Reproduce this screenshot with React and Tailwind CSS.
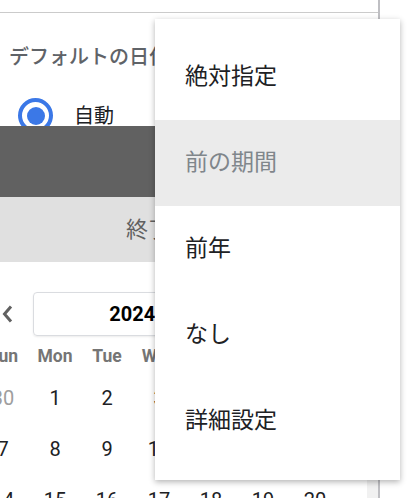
const MENU_ITEMS = [
  { label: '絶対指定' },
  { label: '前の期間', active: true },
  { label: '前年' },
  { label: 'なし' },
  { label: '詳細設定' },
]

const DAYS = ['Sun', 'Mon', 'Tue', 'Wed', 'Thu', 'Fri', 'Sat']

const WEEKS = [
  [{ d: 30, muted: true }, { d: 1 }, { d: 2 }, { d: 3 }, { d: 4 }, { d: 5 }, { d: 6 }],
  [{ d: 7 }, { d: 8 }, { d: 9 }, { d: 10 }, { d: 11 }, { d: 12 }, { d: 13 }],
  [{ d: 14 }, { d: 15 }, { d: 16 }, { d: 17 }, { d: 18 }, { d: 19 }, { d: 20 }],
]

const font = { fontFamily: 'Roboto, "Noto Sans CJK JP", sans-serif' }

function Chevron({ flip }) {
  return (
    <svg width="11" height="18" viewBox="0 0 11 18" className={flip ? 'rotate-180' : ''}>
      <polyline points="9,1.5 2.5,9 9,16.5" fill="none" stroke="#616161" strokeWidth="3" />
    </svg>
  )
}

function MenuItems() {
  return MENU_ITEMS.map(item => (
    <div key={item.label}
      className={`h-[86px] flex items-center pl-[30px] text-[23px] ${item.active ? 'bg-[#ebebeb] text-[#80868b]' : 'text-[#202124]'}`}>
      {item.label}
    </div>
  ))
}

export default function App() {
  return (
    <div className="relative w-[416px] h-[498px] overflow-hidden bg-white" style={font}>

      <div className="w-[380px] h-full border-r-2 border-[#bfbfc3] flex flex-col">
        <div className="h-[13px] border-b border-[#cbcbcb] shrink-0"></div>

        <div className="h-[113px] overflow-hidden shrink-0">
          <p className="pt-[30px] pl-[9px] text-[20px] leading-[28px] font-medium text-[#5f6368] whitespace-nowrap">
            デフォルトの日付
          </p>
          <div className="flex items-center mt-[27px] pl-[18px]">
            <div className="w-[35px] h-[35px] rounded-full border-[4px] border-[#3b78e7] flex items-center justify-center">
              <div className="w-[18px] h-[18px] rounded-full bg-[#3b78e7]"></div>
            </div>
            <span className="ml-[21px] text-[20px] text-[#202124]">自動</span>
          </div>
        </div>

        <div className="h-[71px] bg-[#616161] shrink-0"></div>

        <div className="h-[65px] bg-[#e0e0e0] shrink-0 flex items-center pl-[126px]">
          <span className="text-[22px] text-[#616161]">終了日</span>
        </div>

        <div className="flex-1 flex">
          <div className="flex-1">
            <div className="flex items-center ml-[-23px] pt-[30px]">
              <div className="w-[56px] flex justify-center pl-[4px]"><Chevron /></div>
              <div className="w-[254px] h-[44px] rounded border border-[#dadce0] shadow-[0_1px_2px_rgba(0,0,0,0.08)] flex items-center justify-center pr-[4px] text-[20px] font-bold text-black">
                2024年7月
              </div>
              <div className="w-[52px] flex justify-center"><Chevron flip /></div>
            </div>

            <div className="grid grid-cols-[repeat(7,52px)] ml-[-23px] mt-[10px]">
              {DAYS.map(d => (
                <div key={d} className="h-[20px] flex items-center justify-center text-[17.5px] font-bold text-[#757575]">{d}</div>
              ))}
            </div>

            <div className="grid grid-cols-[repeat(7,52px)] ml-[-23px] mt-[6px]">
              {WEEKS.flat().map((c, i) => (
                <div key={i}
                  className={`h-[51px] flex items-center justify-center text-[20px] ${c.muted ? 'text-[#9e9e9e]' : 'text-[#202124]'}`}>
                  {c.d}
                </div>
              ))}
            </div>
          </div>
          <div className="w-[11px] bg-[#f1f1f1]"></div>
        </div>
      </div>

      {/* dropdown menu */}
      <div className="absolute left-[155px] top-[19px] w-[245px] bg-white pt-[15px] pb-[16px] shadow-[0_2px_6px_rgba(0,0,0,0.3)]">
        <MenuItems />
      </div>
    </div>
  )
}
